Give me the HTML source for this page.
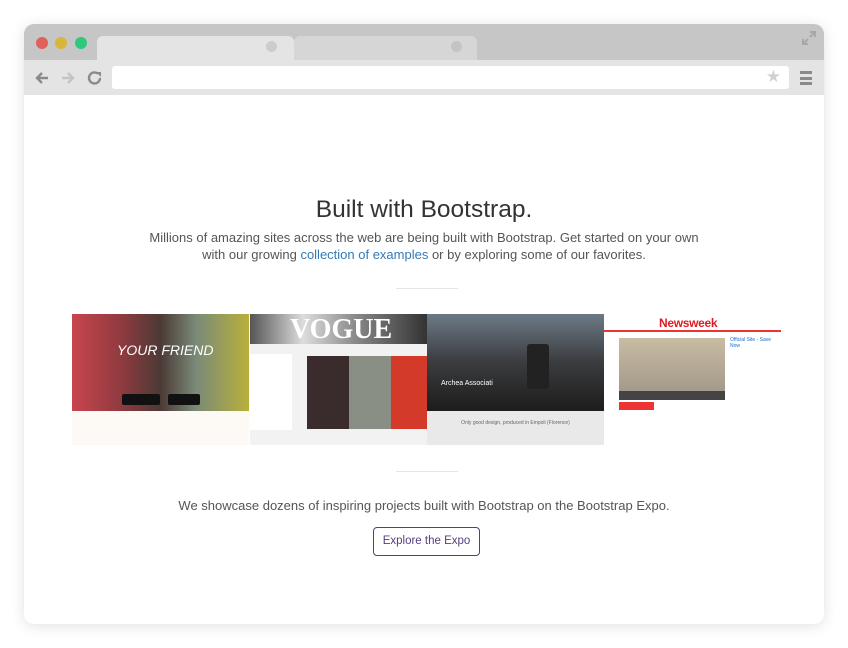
<!DOCTYPE html>
<html><head><style>
*{margin:0;padding:0;box-sizing:border-box}
body{width:848px;height:648px;background:#fff;font-family:"Liberation Sans",sans-serif;position:relative;overflow:hidden}
.win{position:absolute;left:24px;top:24px;width:800px;height:600px;border-radius:10px;background:#fff;box-shadow:0 2px 14px rgba(0,0,0,.12);overflow:hidden}
.tabbar{position:absolute;left:0;top:0;width:800px;height:36px;background:#c6c6c6}
.dot{position:absolute;top:13px;width:12px;height:12px;border-radius:50%}
.tab{position:absolute;top:12px;height:24px;border-radius:6px 6px 0 0}
.toolbar{position:absolute;left:0;top:36px;width:800px;height:35px;background:#e4e4e4}
.addr{position:absolute;left:88px;top:6px;width:677px;height:23px;background:#fff;border-radius:3px}
.c{position:absolute;left:0;width:848px;text-align:center;color:#555}
.img{position:absolute;top:314px;height:131px;overflow:hidden}
.hr{position:absolute;left:396px;width:62px;height:1px;background:#e5e5e5}
</style></head><body>
<div class="win">
 <div class="tabbar">
  <div class="dot" style="left:12px;background:#e0605b"></div>
  <div class="dot" style="left:31px;background:#d9b53a"></div>
  <div class="dot" style="left:51px;background:#2fc77a"></div>
  <div class="tab" style="left:270px;width:183px;background:#d6d6d6"></div>
  <div class="tab" style="left:73px;width:197px;background:#e4e4e4"></div>
  <div style="position:absolute;left:242px;top:17px;width:11px;height:11px;border-radius:50%;background:#ccc"></div>
  <div style="position:absolute;left:427px;top:17px;width:11px;height:11px;border-radius:50%;background:#c4c4c4"></div>
  <svg style="position:absolute;left:778px;top:7px" width="14" height="14"><path d="M8 1h5v5M13 1L8 6M6 13H1V8M1 13l5-5" stroke="#a8a8a8" stroke-width="2" fill="none"/></svg>
 </div>
 <div class="toolbar">
  <svg style="position:absolute;left:10px;top:10px" width="70" height="16"><path d="M14 8H3M8 3L3 8l5 5" stroke="#8a8a8a" stroke-width="2.4" fill="none"/><path d="M28 8h11M34 3l5 5-5 5" stroke="#c4c4c4" stroke-width="2.4" fill="none"/><path d="M66 8a5.5 5.5 0 1 1-2-4.3" stroke="#8a8a8a" stroke-width="2.4" fill="none"/><path d="M62 2h5v5z" fill="#8a8a8a"/></svg>
  <div class="addr"><span style="position:absolute;right:8px;top:1px;color:#d0d0d0;font-size:17px">★</span></div>
  <div style="position:absolute;left:776px;top:11px;width:12px;height:14px;border-top:3px solid #8a8a8a;border-bottom:3px solid #8a8a8a"><div style="margin-top:2.5px;height:3px;background:#8a8a8a"></div></div>
 </div>
</div>
<div class="c" style="top:196px;font-size:24.5px;color:#333">Built with Bootstrap.</div>
<div class="c" style="top:229px;font-size:13px;line-height:17px;">Millions of amazing sites across the web are being built with Bootstrap. Get started on your own<br>with our growing <span style="color:#337ab7">collection of examples</span> or by exploring some of our favorites.</div>
<div class="hr" style="top:288px"></div>
<div class="img" style="left:72px;width:177px;background:#fdfaf5">
 <div style="height:97px;background:linear-gradient(90deg,#c9454f 0%,#8a3a3e 30%,#4b3a36 50%,#7a8a78 70%,#b9b03a 100%)"></div>
 <div style="position:absolute;left:45px;top:28px;color:#fff;font-size:14px;font-style:italic">YOUR FRIEND</div>
 <div style="position:absolute;left:50px;top:80px;width:38px;height:11px;background:#111;border-radius:2px"></div>
 <div style="position:absolute;left:96px;top:80px;width:32px;height:11px;background:#111;border-radius:2px"></div>
</div>
<div class="img" style="left:250px;width:177px;background:#f2f2f2">
 <div style="height:30px;background:linear-gradient(90deg,#555,#ddd 30%,#888 60%,#333)"></div>
 <div style="position:absolute;left:40px;top:0;font:bold 28px 'Liberation Serif',serif;color:#fff">VOGUE</div>
 <div style="position:absolute;left:0;top:40px;width:42px;height:76px;background:#fff"></div>
 <div style="position:absolute;left:57px;top:42px;width:42px;height:73px;background:#3a2c2c"></div>
 <div style="position:absolute;left:99px;top:42px;width:42px;height:73px;background:#8a8f86"></div>
 <div style="position:absolute;left:141px;top:42px;width:36px;height:73px;background:#d33a2a"></div>
</div>
<div class="img" style="left:427px;width:177px;background:#e9e9e9">
 <div style="height:97px;background:linear-gradient(180deg,#6c7a86,#3a3c3e 50%,#1e1c1c)"></div>
 <div style="position:absolute;left:100px;top:30px;width:22px;height:45px;background:#222;border-radius:3px"></div>
 <div style="position:absolute;left:14px;top:66px;color:#fff;font-size:7px">Archea Associati</div>
 <div style="position:absolute;left:0;top:106px;width:177px;text-align:center;font-size:5px;color:#666">Only good design, produced in Empoli (Florence)</div>
</div>
<div class="img" style="left:604px;width:177px;background:#fff">
 <div style="position:absolute;left:55px;top:2px;color:#e21a22;font:bold 12px 'Liberation Sans';letter-spacing:-.3px">Newsweek</div>
 <div style="position:absolute;left:0;top:16px;width:177px;height:2px;background:#e33"></div>
 <div style="position:absolute;left:15px;top:24px;width:106px;height:62px;background:linear-gradient(180deg,#c9bca4,#9d9486)"></div>
 <div style="position:absolute;left:15px;top:77px;width:106px;height:9px;background:#444"></div>
 <div style="position:absolute;left:15px;top:88px;width:35px;height:8px;background:#e33"></div>
 <div style="position:absolute;left:126px;top:23px;color:#1a6bd0;font-size:5px">Official Site - Save Now</div>
</div>
<div class="hr" style="top:471px"></div>
<div class="c" style="top:498px;font-size:13px">We showcase dozens of inspiring projects built with Bootstrap on the Bootstrap Expo.</div>
<div style="position:absolute;left:373px;top:527px;width:107px;height:29px;border:1px solid #563d7c;border-radius:4px;color:#563d7c;font-size:11.5px;text-align:center;line-height:27px">Explore the Expo</div>
</body></html>
